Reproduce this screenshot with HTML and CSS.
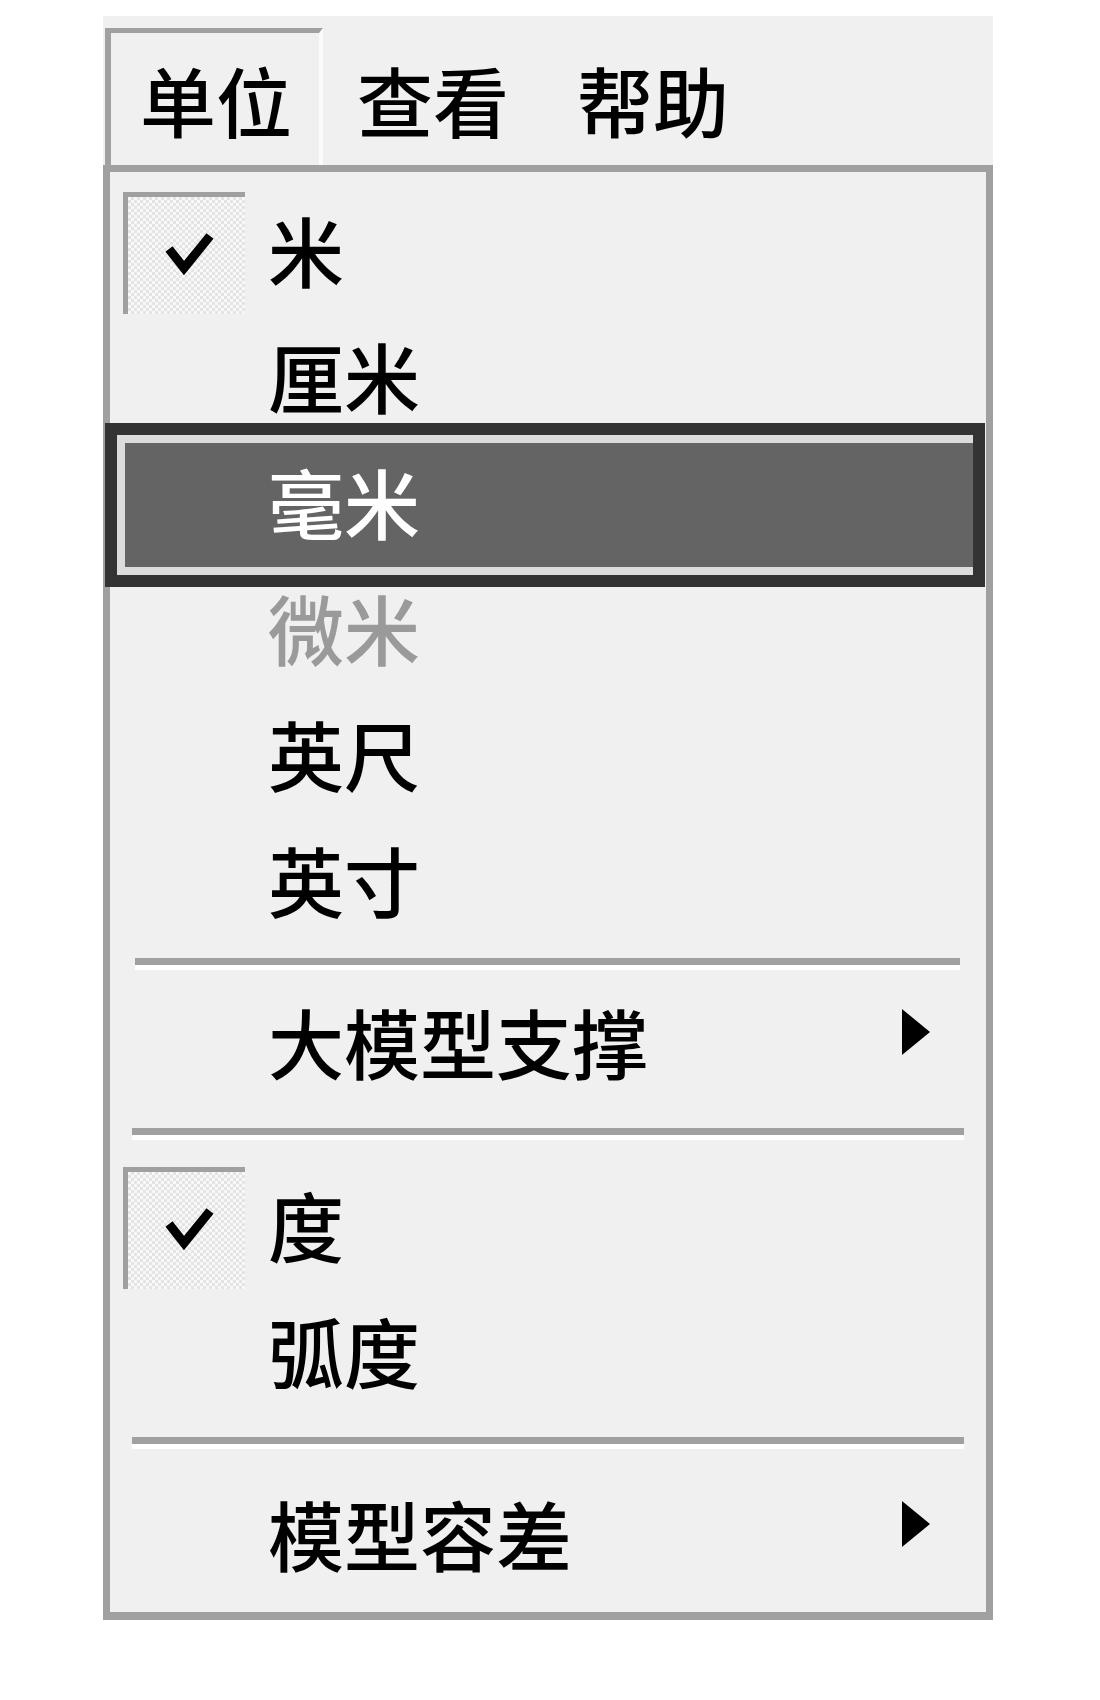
FILE: index.html
```html
<!DOCTYPE html>
<html>
<head>
<meta charset="utf-8">
<title>单位菜单</title>
<link rel="stylesheet" href="styles.css">
</head>
<body>

<div class="window">
	<div class="menubar">
		<div class="mb-item pressed">单位</div>
		<div class="mb-item">查看</div>
		<div class="mb-item">帮助</div>
	</div>

	<div class="popup">
		<div class="item">
			<span class="check">
				<svg width="117" height="117" viewBox="0 0 117 117"><polyline points="41,52 56,71 82,39" fill="none" stroke="#000" stroke-width="9"/></svg>
			</span>
			<span class="label">米</span>
		</div>
		<div class="item"><span class="label">厘米</span></div>
		<div class="item active"><span class="label">毫米</span></div>
		<div class="item disabled"><span class="label">微米</span></div>
		<div class="item"><span class="label">英尺</span></div>
		<div class="item"><span class="label">英寸</span></div>

		<div class="sep first"></div>

		<div class="item">
			<span class="label">大模型支撑</span>
			<svg class="arrow" width="28" height="46" viewBox="0 0 28 46"><polygon points="0,0 28,23 0,46" fill="#000"/></svg>
		</div>

		<div class="sep"></div>

		<div class="item">
			<span class="check">
				<svg width="117" height="117" viewBox="0 0 117 117"><polyline points="41,52 56,71 82,39" fill="none" stroke="#000" stroke-width="9"/></svg>
			</span>
			<span class="label">度</span>
		</div>
		<div class="item"><span class="label">弧度</span></div>

		<div class="sep"></div>

		<div class="item">
			<span class="label">模型容差</span>
			<svg class="arrow" width="28" height="46" viewBox="0 0 28 46"><polygon points="0,0 28,23 0,46" fill="#000"/></svg>
		</div>
	</div>
</div>

</body>
</html>
```

FILE: styles.css
```css
body{
	margin: 0;
	background-color: #fff;
	font-family: "Noto Sans CJK SC", "Noto Sans", sans-serif;
	font-weight: 500;
	color: #000;
}

.window{
	width: 890px;
	margin: 16px 0 0 103px;
}

/* menu bar */
.menubar{
	display: flex;
	height: 149px;
	box-sizing: border-box;
	padding: 12px 0 0 2px;
	background-color: #f0f0f0;
}
.mb-item{
	padding: 5px 34px 0;
	font-size: 76px;
	line-height: 132px;
}
.mb-item.pressed{
	padding: 0 27px 0 29px;
	border-top: 5px solid #a0a0a0;
	border-left: 6px solid #a0a0a0;
	border-right: 4px solid #fbfbfb;
}

/* drop down */
.popup{
	background-color: #f0f0f0;
	border: 7px solid #a0a0a0;
	border-bottom-width: 8px;
	padding: 18px 0 12px;
}

.item{
	display: flex;
	align-items: center;
	height: 126px;
	box-sizing: border-box;
	padding-left: 158px;
	position: relative;
	font-size: 76px;
	line-height: 118px;
}
.item .label{
	padding-bottom: 8px;
}
.item.disabled{
	color: #9a9a9a;
}
.item.active{
	height: 140px;
	margin: -7px 13px -7px 7px;
	padding-left: 143px;
	background-color: #646464;
	color: #fff;
	border: 8px solid #dcdcdc;
	border-right: 0;
	outline: 12px solid #333;
	outline-offset: 0;
}

.check{
	position: absolute;
	left: 13px;
	top: 2px;
	width: 122px;
	height: 122px;
	box-sizing: border-box;
	border-top: 5px solid #a0a0a0;
	border-left: 5px solid #a0a0a0;
	background: repeating-conic-gradient(#e4e4e4 0 25%, #f8f8f8 0 50%) 0 0 / 6px 6px;
}
.check svg{
	display: block;
}

.arrow{
	margin-left: auto;
	margin-right: 56px;
	margin-bottom: 26px;
}

.sep{
	margin: 20px 22px 25px;
	border-top: 7px solid #a0a0a0;
	border-bottom: 5px solid #fff;
}
.sep.first{
	margin: 12px 26px 12px 25px;
}
```
